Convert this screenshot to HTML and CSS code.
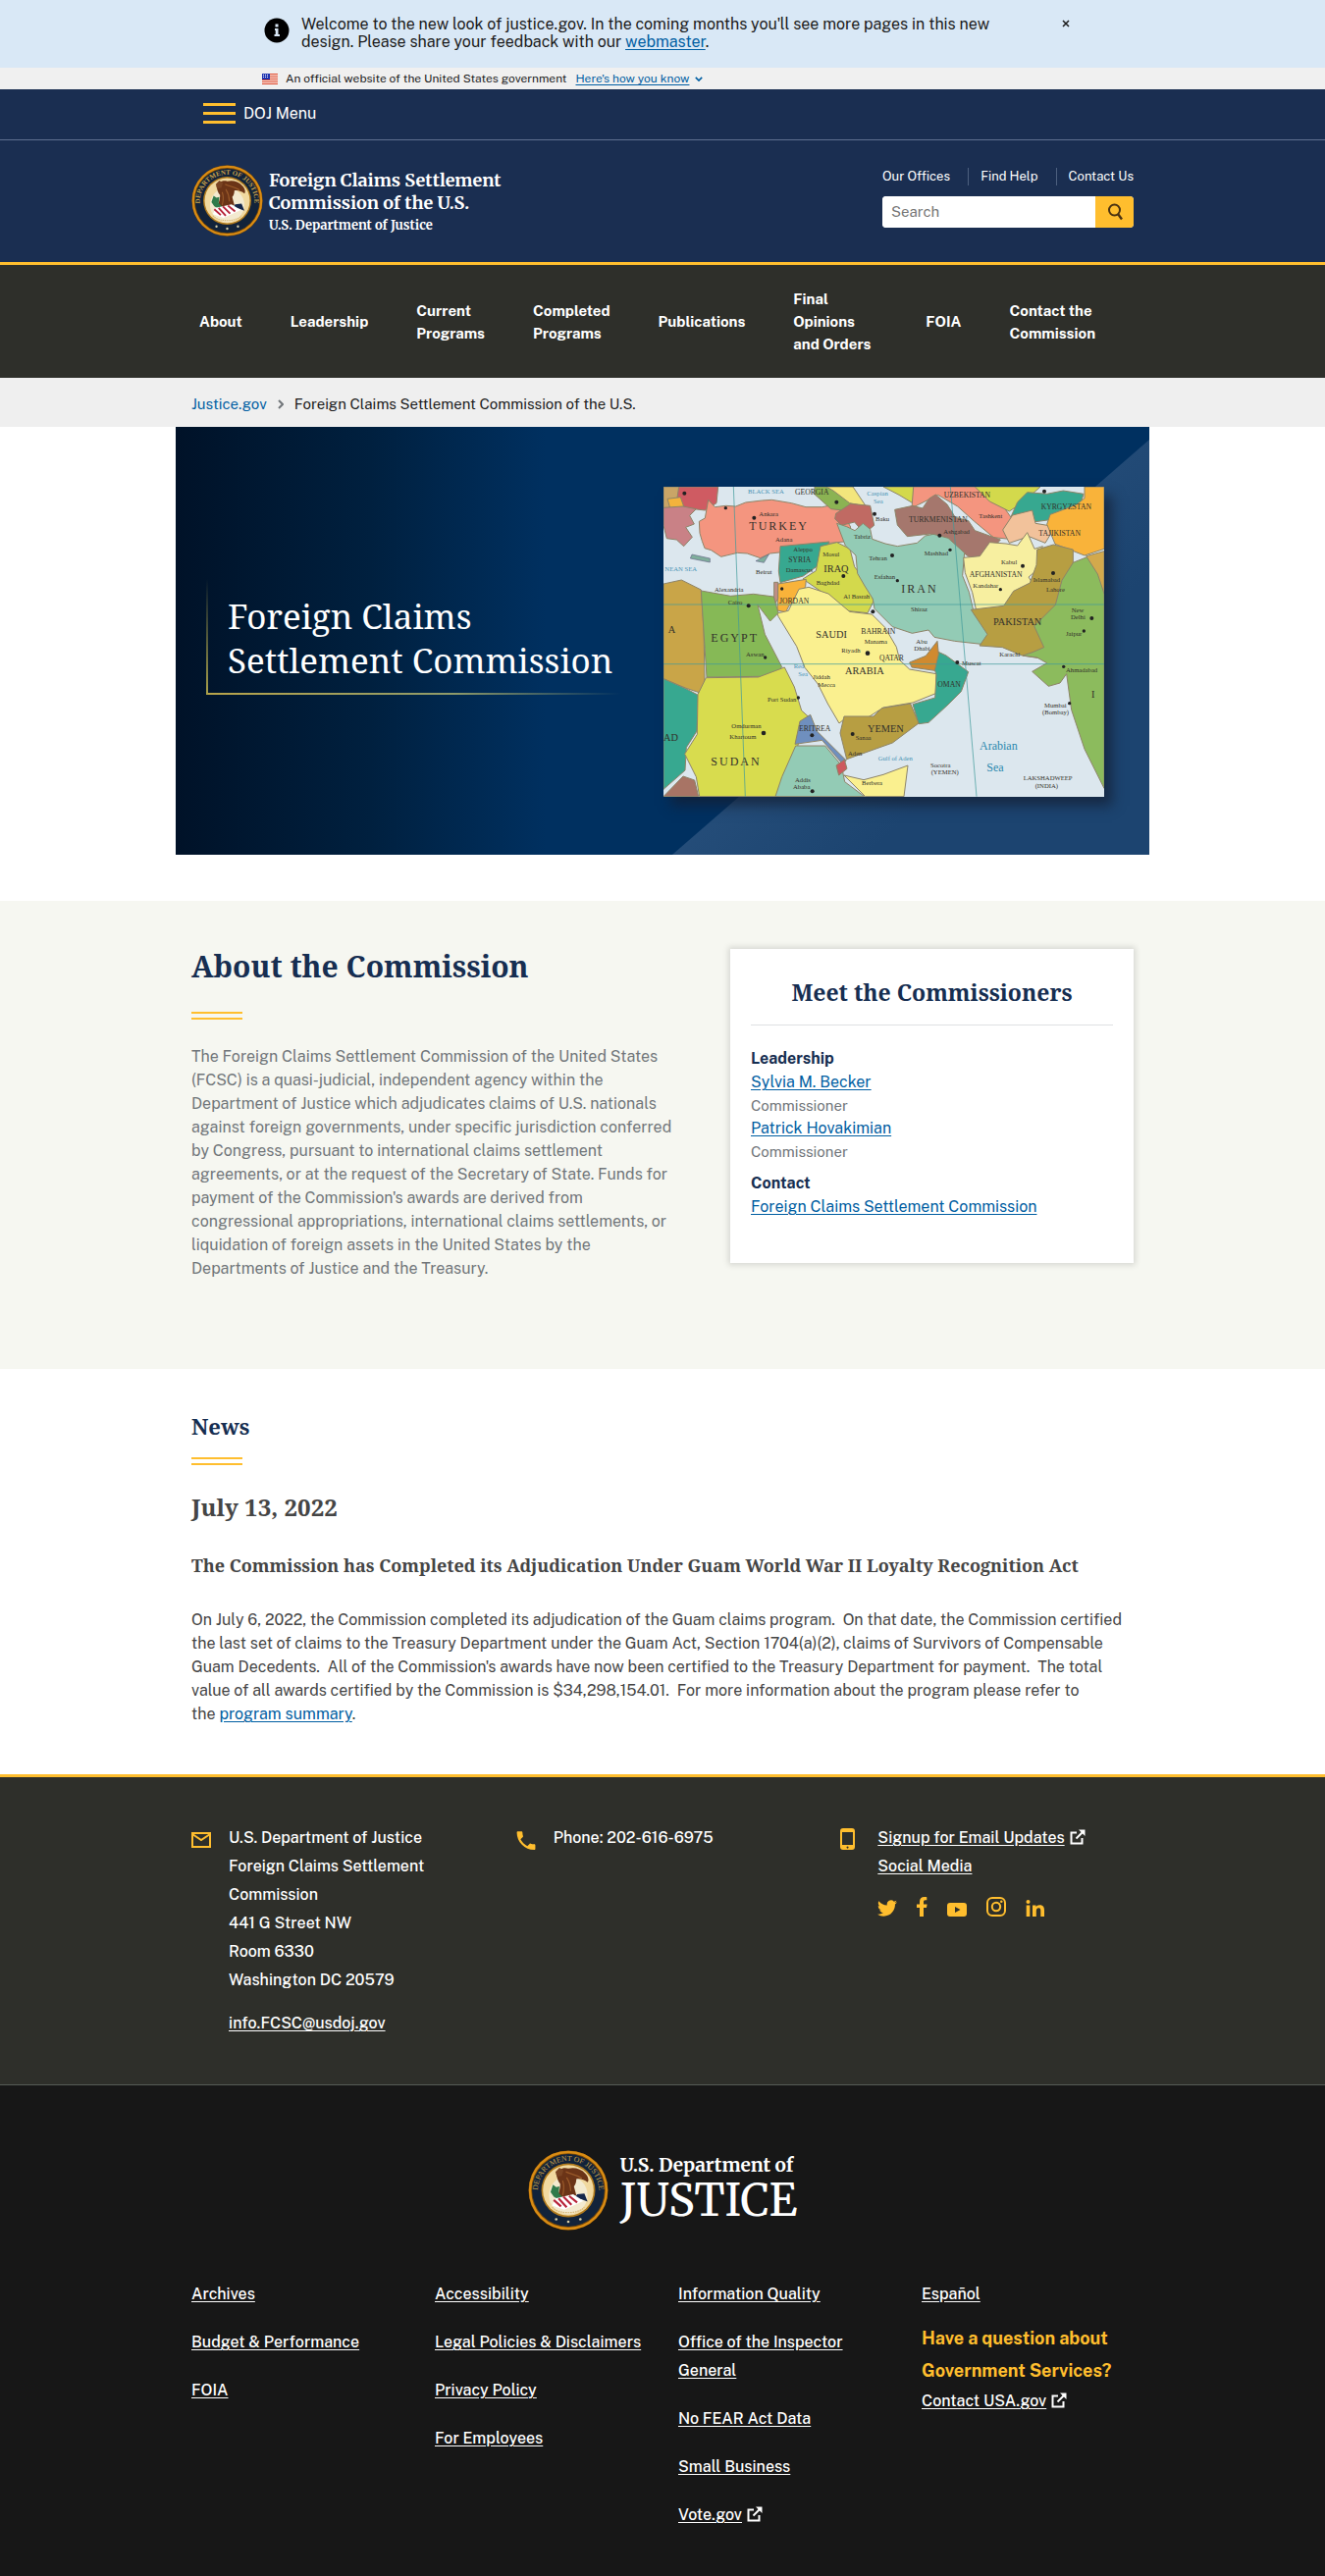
FILE: index.html
```html
<!DOCTYPE html>
<html lang="en">
<head>
<meta charset="utf-8">
<meta name="viewport" content="width=device-width, initial-scale=1">
<title>Foreign Claims Settlement Commission of the U.S.</title>
<link rel="stylesheet" href="styles.css">
</head>
<body>
<svg class="defs" width="0" height="0" aria-hidden="true">
  <defs>
    <path id="seal-arc" d="M13.500 62A38 38 0 1 1 86.500 62"/>
    <symbol id="seal" viewBox="0 0 100 100">
      <circle cx="50" cy="50" r="49.500" fill="#7a4a08"/>
      <circle cx="50" cy="50" r="47.500" fill="none" stroke="#d98c14" stroke-width="3"/>
      <circle cx="50" cy="50" r="45" fill="#12233a"/>
      <text class="seal-text" font-size="9.500" fill="#c9a24a"><textPath href="#seal-arc" startOffset="50%" text-anchor="middle">DEPARTMENT OF JUSTICE</textPath></text>
      <g fill="#d8cfa8"><circle cx="35" cy="86" r="1.600"/><circle cx="50" cy="89" r="1.600"/><circle cx="65" cy="86" r="1.600"/></g>
      <circle cx="50" cy="50" r="33.500" fill="#b07a1c"/>
      <circle cx="50" cy="50" r="31.500" fill="#f1d9a0"/>
      <circle cx="50" cy="56" r="24" fill="#f3ead0"/>
      <path d="M35 30c2-6 9-9 15-7 7-2 16 0 21 6 4 4 5 9 3 11-4-3-9-5-14-4 0 4-1 7-3 9l3 11-6 4-5 6-6-6-6-4c2-5 3-9 3-14-3-3-4-8-5-12z" fill="#6b3417"/>
      <path d="M47 27c6 3 12 3 20 8M48 34c3 5 5 9 5 17M43 38c2 6 2 11 0 18" stroke="#9a5a2a" stroke-width="1.500" fill="none"/>
      <path d="M34 27l5-5 5 3-2 7-6 1z" fill="#7a4423"/>
      <path d="M28 52l3-9 4 3 4-1-1 8 5 6-4 3-7-4z" fill="#2f7a4b"/>
      <path d="M70 54l4 10-8-3-9 0 4-6z" fill="#14264a"/>
      <path d="M34 60l22-5 13 8-24 11-15-5z" fill="#fff"/>
      <path d="M32 62l9 8M38 60l10 11M44 58l10 10M51 57l10 8" stroke="#b7243a" stroke-width="2.600"/>
      <path d="M30 71c8 9 32 9 40 0" fill="none" stroke="#d9b977" stroke-width="1.500" stroke-dasharray="2 1"/>
    </symbol>
    <symbol id="external" viewBox="0 0 16 16">
      <path d="M7 3.500H1.500v11h11V9" fill="none" stroke="currentColor" stroke-width="2"/>
      <path d="M6.500 9.500L13 3" stroke="currentColor" stroke-width="2"/>
      <path d="M9 .5h6.500V7z" fill="currentColor"/>
    </symbol>
  </defs>
</svg>

<section class="alert" aria-label="Site announcement">
  <div class="alert-inner">
    <svg class="alert-icon" viewBox="0 0 26 26" aria-hidden="true"><circle cx="13" cy="13" r="12.500" fill="#000"/><path d="M11.500 6.500h3v3h-3zM11 11h3.500v6H16v2h-5.500v-2h1.200v-4H11z" fill="#d9e8f6"/></svg>
    <p class="alert-text">Welcome to the new look of justice.gov. In the coming months you'll see more pages in this new design. Please share your feedback with our <a class="link" href="#">webmaster</a>.</p>
    <button class="alert-close" type="button" aria-label="Close"><svg viewBox="0 0 8 8" width="8" height="8" aria-hidden="true"><path d="M1 1l6 6M7 1L1 7" stroke="#1b1b1b" stroke-width="1.500"/></svg></button>
  </div>
</section>

<section class="gov" aria-label="Official website">
  <div class="gov-inner">
    <svg class="flag" viewBox="0 0 16 11" aria-hidden="true"><path fill="#fff" d="M0 0h16v11H0z"/><path d="M0 .5h16M0 2.500h16M0 4.500h16M0 6.500h16M0 8.500h16M0 10.500h16" stroke="#db3e1f"/><path fill="#1e33b1" d="M0 0h8v6H0z"/><path d="M1 1.500h6M1 3.500h6" stroke="#fff" stroke-dasharray="1 1"/></svg>
    <span>An official website of the United States government</span>
    <a class="link gov-link" href="#">Here's how you know</a>
    <svg class="chev" viewBox="0 0 10 6" aria-hidden="true"><path d="M1 1l4 4 4-4" fill="none" stroke="#005ea2" stroke-width="2"/></svg>
  </div>
</section>

<header class="header">
  <div class="menu-bar">
    <div class="wrap">
      <button class="menu-button" type="button"><span class="burger"></span>DOJ Menu</button>
    </div>
  </div>
  <div class="wrap masthead">
    <a class="brand" href="#">
      <svg class="brand-seal" aria-hidden="true"><use href="#seal"/></svg>
      <span class="brand-text"><span class="brand-name">Foreign Claims Settlement<br>Commission of the U.S.</span><span class="brand-dept">U.S. Department of Justice</span></span>
    </a>
    <div class="tools">
      <nav class="tool-links" aria-label="Secondary"><a href="#">Our Offices</a><a href="#">Find Help</a><a href="#">Contact Us</a></nav>
      <form class="search" role="search">
        <input type="search" placeholder="Search" aria-label="Search">
        <button type="submit" aria-label="Search"><svg viewBox="0 0 16 18" width="16" height="18" aria-hidden="true"><circle cx="7.500" cy="7" r="5.500" fill="none" stroke="#4a3212" stroke-width="2"/><path d="M11 11l4 5.500" stroke="#4a3212" stroke-width="2.400"/></svg></button>
      </form>
    </div>
  </div>
</header>

<nav class="nav" aria-label="Primary">
  <div class="wrap nav-inner">
    <a href="#">About</a>
    <a href="#">Leadership</a>
    <a href="#">Current<br>Programs</a>
    <a href="#">Completed<br>Programs</a>
    <a href="#">Publications</a>
    <a class="nav-wide" href="#">Final<br>Opinions<br>and Orders</a>
    <a href="#">FOIA</a>
    <a href="#">Contact the<br>Commission</a>
  </div>
</nav>

<nav class="crumbs" aria-label="Breadcrumb">
  <div class="wrap crumbs-inner">
    <a href="#">Justice.gov</a>
    <svg viewBox="0 0 6 10" width="6" height="10" aria-hidden="true"><path d="M1 1l4 4-4 4" fill="none" stroke="#71767a" stroke-width="2"/></svg>
    <span>Foreign Claims Settlement Commission of the U.S.</span>
  </div>
</nav>

<main>
  <section class="hero">
    <h1 class="hero-title">Foreign Claims<br>Settlement Commission</h1>
    <svg class="map" viewBox="48 198 1347 948" role="img" aria-label="Map of the Middle East">
      <path fill="#dce7ee" d="M48 198h1347v948H48z"/>
      <g stroke="#8d8468" stroke-width="3" stroke-linejoin="round">
        <!-- Balkans, Greece -->
        <path fill="#c9a567" d="M48 198h60l-12 50-48 20z"/>
        <path fill="#cf5b62" d="M95 198h120l-5 50-35 22-70-8-15-30z"/>
        <path fill="#f3b33c" d="M60 235l40-5 10 28-40 12z"/>
        <path fill="#c98186" d="M48 262l60-4 40 8-20 20 14 26-26 10 20 30-26 28-22-20-30-4-10-40z"/>
        <!-- Turkey -->
        <path fill="#f4957f" d="M185 238l20 22 34-4 30 2 30-12 50-6 30-2 60 10 44 12 50 0 40-8 20 14 7 20 20 35-10 35-10 10-40 4-30 16-60 2-60 10-36 4-30 14-40-14-30-2-50 12-30-20-20-6-8-22-7-24-2-36 18-10z"/>
        <!-- Caucasus and Central Asia -->
        <path fill="#8bb353" d="M510 198h70l60 50 10 28-90-10-50-45z"/>
        <path fill="#f3e67c" d="M545 198h82l40 60-50-10-50-38z"/>
        <path fill="#c06a63" d="M575 280l45-30 60 6 12 60-30 25-30-35-40 10-20-20z"/>
        <path fill="#d3d94c" d="M720 198h100l-2 55-50-30z"/>
        <path fill="#f4957f" d="M812 198h220l40 40 50 70-15 50-50-5-60-50-50-45-60-35-60 30-20 10z"/>
        <path fill="#d3d94c" d="M1000 198h200l-50 45-45 30-60-30z"/>
        <path fill="#a5776d" d="M755 268l55-12 30 8 20-30 20-12 35 30 25 40 40 10 20 30 78 28-40 45-35 10-15 2-40-30-25-30-60-15-70 8-30-35z"/>
        <path fill="#37a890" d="M1110 290l20-45 30-30 60 5 50-10 62 10-10 35-60 25-40 20-60 8z"/>
        <path fill="#f2c29b" d="M1085 330l30-45 60-15 10 40 60 10-30 50-50-20-60 20z"/>
        <path fill="#f9b33a" d="M1335 198h60v190l-60 20-90-35-25-60 10-30 80-30 25-20z"/>
        <!-- Levant, Iraq, Iran -->
        <path fill="#37a890" d="M405 380l150-14-30 70-50 35-70 20-5-35z"/>
        <path fill="#d3d94c" d="M528 380l50-12 40 20 14 55 40 50 18 55-18 36-58-6-70-50-70-48 40-25z"/>
        <path fill="#f9b33a" d="M398 495l86-14-2 22-20 40-30 18-10 20-26-5z"/>
        <path fill="#bf8f86" d="M386 490l12 0 0 50-12 20z"/>
        <path fill="#93cbb5" d="M578 310l30 10 25 12 25-22 22 18 6 30 40 14 37 8 60-10 25-22 25-5 45 12 50 45-6 70 20 50 16 68 50 60-20 32-90-10-62-12-18-22-50 10-60-20-55-55-5-30-25-40-22-38-5-55-32-30z"/>
        <!-- South Asia -->
        <path fill="#f7efa0" d="M965 415l50-5 30-42 50 4 35 6 30-40 22 50 25-8 -13 38-6 36-24 20 10 16-30 22-20 26-22 32-98 6-12-55-22-60z"/>
        <path fill="#b79e42" d="M1190 390l50-15 60 15 0 55-15 45-20 70-65 65 30 65-20 34-66-10-60-25-70-5 24-35-50-75 100-12 30-45 50-25 20-55z"/>
        <path fill="#8cbb5d" d="M1300 430l50-20 45 60v650l-60-120-40-120-15-110-20 28-35 10-50-45 45-26-30-17-44-6 30-10 35-15-30-65 65-65 20-75z"/>
        <path fill="#d3a94c" d="M1340 410l55-15v130l-20-60z"/>
        <!-- Arabia -->
        <path fill="#faf08f" d="M395 585l35-8 32-66 30-6 60 20 65 55 68 8 40 40 35 60 10 40 30 28 82 14-2 60-70 28-90 15-50 32-70 4-15 12-35-60-30-60-40-50-25-65-55-90z"/>
        <path fill="#37a890" d="M882 700l30 14 68 50-22 60-40 40-60 55-30 4-18-60 68-20 4-70-16-50z"/>
        <path fill="#d08a2f" d="M800 735l50-20 35-45 4 40-12 50-70-10z"/>
        <path fill="#b79e42" d="M600 900l90 0 25-25 88-14 25 60-80 60-140 50-20-80z"/>
        <!-- Africa -->
        <path fill="#c9a548" d="M48 495l55-12 60 30 8 120 4 200-60-20-67-28z"/>
        <path fill="#86b956" d="M163 516l90 16 70-6 62 8 14 50-25 25-38-50 22 90 52 100-30 35-40-6-160 2z"/>
        <path fill="#37a890" d="M48 785l68 30 38 20-4 110-32 50-4 70-66 58z"/>
        <path fill="#d8dc4e" d="M178 782l160-2 80-30 30 60 22 72 22 20-24 50-20 80-30 50-20 63H158l-10-60-35-70 38-60 2-122z"/>
        <path fill="#6f8fbe" d="M450 985l15-70 32-20 20 50 90 90-14 8-60-70z"/>
        <path fill="#93cbb5" d="M390 1145l20-60 42-95 90 0 50 60 10 50 60 45z"/>
        <path fill="#cd5a5e" d="M576 1050l25-18 8 28-25 20z"/>
        <path fill="#faf08f" d="M600 1080l60 14 60-16 75-28-12 95H665z"/>
        <path fill="#a87465" d="M48 1145l60-62 35 12 12 50z"/>
      </g>
      <path d="M135 405l55 12 0 12-60-12zM330 425l40-20-15 25z" fill="#7fae9c" stroke="#668" stroke-width="2"/>
      <path d="M48 558h1347M48 740h1347M262 198l36 947M925 198l80 947" fill="none" stroke="#3f9a9a" stroke-width="3" opacity=".7"/>
      <g class="map-label map-xl"><text x="310" y="330">TURKEY</text><text x="775" y="522">IRAN</text><text x="193" y="672">EGYPT</text><text x="193" y="1050">SUDAN</text></g>
      <g class="map-label map-l"><text x="514" y="660">SAUDI</text><text x="603" y="772">ARABIA</text><text x="538" y="458">IRAQ</text><text x="1056" y="622">PAKISTAN</text><text x="672" y="947">YEMEN</text><text x="62" y="644">A</text><text x="48" y="976">AD</text><text x="1356" y="842">I</text></g>
      <g class="map-label map-m"><text x="430" y="430">SYRIA</text><text x="402" y="554">JORDAN</text><text x="798" y="306">TURKMENISTAN</text><text x="1202" y="267">KYRGYZSTAN</text><text x="1195" y="347">TAJIKISTAN</text><text x="983" y="474">AFGHANISTAN</text><text x="886" y="810">OMAN</text><text x="708" y="729">QATAR</text><text x="905" y="230">UZBEKISTAN</text><text x="450" y="223">GEORGIA</text><text x="462" y="944">ERITREA</text><text x="652" y="648">BAHRAIN</text></g>
      <g class="map-label map-s"><text x="340" y="289">Ankara</text><text x="390" y="365">Adana</text><text x="445" y="397">Aleppo</text><text x="535" y="412">Mosul</text><text x="515" y="497">Baghdad</text><text x="676" y="423">Tehran</text><text x="692" y="481">Esfahan</text><text x="845" y="409">Mashhad</text><text x="630" y="356">Tabriz</text><text x="696" y="304">Baku</text><text x="904" y="341">Ashgabad</text><text x="1012" y="293">Tashkent</text><text x="1080" y="434">Kabul</text><text x="994" y="507">Kandahar</text><text x="1178" y="490">Islamabad</text><text x="1218" y="519">Lahore</text><text x="1295" y="582">New</text><text x="1293" y="604">Delhi</text><text x="1278" y="655">Jaipur</text><text x="1075" y="718">Karachi</text><text x="1278" y="766">Ahmadabad</text><text x="1212" y="873">Mumbai</text><text x="1206" y="893">(Bombay)</text><text x="592" y="705">Riyadh</text><text x="505" y="785">Jiddah</text><text x="520" y="810">Mecca</text><text x="245" y="558">Cairo</text><text x="204" y="518">Alexandria</text><text x="300" y="717">Aswan</text><text x="366" y="855">Port Sudan</text><text x="256" y="937">Omdurman</text><text x="250" y="968">Khartoum</text><text x="450" y="1100">Addis</text><text x="444" y="1121">Ababa</text><text x="635" y="972">Sanaa</text><text x="654" y="1110">Berbera</text><text x="598" y="541">Al Basrah</text><text x="662" y="678">Manama</text><text x="820" y="678">Abu</text><text x="814" y="700">Dhabi</text><text x="960" y="744">Muscat</text><text x="804" y="580">Shiraz</text><text x="330" y="464">Beirut</text><text x="422" y="460">Damascus</text><text x="864" y="1056">Socotra</text><text x="866" y="1076">(YEMEN)</text><text x="1148" y="1096">LAKSHADWEEP</text><text x="1184" y="1118">(INDIA)</text><text x="612" y="1020">Aden</text></g>
      <g class="map-label map-sea"><text x="1014" y="1003">Arabian</text><text x="1036" y="1069">Sea</text></g>
      <g class="map-label map-s map-blue"><text x="306" y="218">BLACK SEA</text><text x="670" y="226">Caspian</text><text x="690" y="248">Sea</text><text x="52" y="455">NEAN SEA</text><text x="446" y="752">Red</text><text x="460" y="778">Sea</text><text x="704" y="1036">Gulf of Aden</text></g>
      <g fill="#222"><circle cx="325" cy="293" r="6"/><circle cx="747" cy="408" r="6"/><circle cx="763" cy="485" r="5"/><circle cx="598" cy="471" r="6"/><circle cx="672" cy="707" r="7"/><circle cx="892" cy="347" r="6"/><circle cx="1146" cy="440" r="6"/><circle cx="1078" cy="512" r="5"/><circle cx="1239" cy="462" r="6"/><circle cx="1357" cy="600" r="6"/><circle cx="1333" cy="639" r="5"/><circle cx="308" cy="562" r="6"/><circle cx="359" cy="720" r="5"/><circle cx="460" cy="843" r="5"/><circle cx="354" cy="951" r="7"/><circle cx="503" cy="1129" r="6"/><circle cx="626" cy="954" r="6"/><circle cx="946" cy="735" r="6"/><circle cx="1271" cy="748" r="5"/><circle cx="1289" cy="860" r="5"/><circle cx="693" cy="281" r="6"/><circle cx="577" cy="245" r="6"/><circle cx="238" cy="263" r="5"/><circle cx="112" cy="218" r="6"/><circle cx="924" cy="391" r="5"/><circle cx="502" cy="958" r="6"/><circle cx="688" cy="580" r="6"/><circle cx="410" cy="510" r="5"/><circle cx="1212" cy="212" r="6"/></g>
    </svg>
  </section>

  <section class="about">
    <div class="wrap about-grid">
      <div>
        <h2 class="title">About the Commission</h2>
        <div class="rule"></div>
        <p class="about-text">The Foreign Claims Settlement Commission of the United States (FCSC) is a quasi-judicial, independent agency within the Department of Justice which adjudicates claims of U.S. nationals against foreign governments, under specific jurisdiction conferred by Congress, pursuant to international claims settlement agreements, or at the request of the Secretary of State. Funds for payment of the Commission's awards are derived from congressional appropriations, international claims settlements, or liquidation of foreign assets in the United States by the Departments of Justice and the Treasury.</p>
      </div>
      <aside class="card">
        <h2 class="card-title">Meet the Commissioners</h2>
        <h3 class="card-sub">Leadership</h3>
        <p class="person"><a class="link" href="#">Sylvia M. Becker</a></p>
        <p class="role">Commissioner</p>
        <p class="person"><a class="link" href="#">Patrick Hovakimian</a></p>
        <p class="role">Commissioner</p>
        <h3 class="card-sub card-contact">Contact</h3>
        <p class="person"><a class="link" href="#">Foreign Claims Settlement Commission</a></p>
      </aside>
    </div>
  </section>

  <section class="news">
    <div class="wrap">
      <h2 class="news-title">News</h2>
      <div class="rule"></div>
      <h2 class="news-date">July 13, 2022</h2>
      <h3 class="news-head">The Commission has Completed its Adjudication Under Guam World War II Loyalty Recognition Act</h3>
      <p class="news-text">On July 6, 2022, the Commission completed its adjudication of the Guam claims program.&nbsp; On that date, the Commission certified the last set of claims to the Treasury Department under the Guam Act, Section 1704(a)(2), claims of Survivors of Compensable Guam Decedents.&nbsp; All of the Commission's awards have now been certified to the Treasury Department for payment.&nbsp; The total value of all awards certified by the Commission is $34,298,154.01.&nbsp; For more information about the program please refer to the&nbsp;<a class="link" href="#">program summary</a>.</p>
    </div>
  </section>
</main>

<footer>
  <div class="contact">
    <div class="wrap contact-grid">
      <div class="contact-item">
        <svg class="contact-icon" viewBox="0 0 20 22" aria-hidden="true"><path d="M1 5h18v14H1zM1 6l9 6 9-6" fill="none" stroke="currentColor" stroke-width="2"/></svg>
        <div>
          <address>U.S. Department of Justice<br>Foreign Claims Settlement Commission<br>441 G Street NW<br>Room 6330<br>Washington DC 20579</address>
          <p class="email"><a href="#">info.FCSC@usdoj.gov</a></p>
        </div>
      </div>
      <div class="contact-item">
        <svg class="contact-icon" viewBox="3 0 18 21" aria-hidden="true"><path d="M6.620 10.790c1.440 2.830 3.760 5.140 6.590 6.590l2.200-2.200c.27-.27.67-.36 1.020-.24 1.120.37 2.330.57 3.570.57.55 0 1 .45 1 1V20c0 .55-.45 1-1 1-9.390 0-17-7.610-17-17 0-.55.45-1 1-1h3.500c.55 0 1 .45 1 1 0 1.250.2 2.450.57 3.570.11.35.03.74-.25 1.020l-2.200 2.200z" fill="currentColor"/></svg>
        <p>Phone: 202-616-6975</p>
      </div>
      <div class="contact-item">
        <svg class="contact-icon" viewBox="0 0 20 22" aria-hidden="true"><path fill-rule="evenodd" d="M3 0h9a3 3 0 0 1 3 3v16a3 3 0 0 1-3 3H3a3 3 0 0 1-3-3V3a3 3 0 0 1 3-3zM2 4v13h11V4zM7.500 18.500a1 1 0 1 0 .1 0z" fill="currentColor"/></svg>
        <div>
          <p><a href="#">Signup for Email Updates</a><svg class="ext" aria-hidden="true"><use href="#external"/></svg></p>
          <p><a href="#">Social Media</a></p>
          <div class="social">
            <a href="#" aria-label="Twitter"><svg width="20" height="17" viewBox="0 2 24 20" aria-hidden="true"><path d="M23.953 4.570a10 10 0 01-2.825.775 4.958 4.958 0 002.163-2.723c-.951.555-2.005.959-3.127 1.184a4.920 4.920 0 00-8.384 4.482C7.690 8.095 4.067 6.130 1.640 3.162a4.822 4.822 0 00-.666 2.475c0 1.710.87 3.213 2.188 4.096a4.904 4.904 0 01-2.228-.616v.06a4.923 4.923 0 003.946 4.827 4.996 4.996 0 01-2.212.085 4.936 4.936 0 004.604 3.417 9.867 9.867 0 01-6.102 2.105c-.39 0-.779-.023-1.170-.067a13.995 13.995 0 007.557 2.209c9.053 0 13.998-7.496 13.998-13.985 0-.21 0-.42-.015-.63A9.935 9.935 0 0024 4.590z" fill="currentColor"/></svg></a>
            <a href="#" aria-label="Facebook"><svg width="11" height="20" viewBox="0 0 11 20" aria-hidden="true"><path d="M3 20v-9H0V7.500h3V5c0-3.200 1.800-5 4.700-5 1.300 0 2.600.2 2.600.2v3H8.800C7.400 3.200 7 4.100 7 5v2.500h3.600L10 11H7v9z" fill="currentColor"/></svg></a>
            <a href="#" aria-label="YouTube"><svg width="20" height="14" viewBox="0 0 20 14" aria-hidden="true"><path fill-rule="evenodd" d="M3 0h14a3 3 0 0 1 3 3v8a3 3 0 0 1-3 3H3a3 3 0 0 1-3-3V3a3 3 0 0 1 3-3zm5 4v6l5.500-3z" fill="currentColor"/></svg></a>
            <a href="#" aria-label="Instagram"><svg width="20" height="20" viewBox="0 0 20 20" aria-hidden="true"><rect x="1" y="1" width="18" height="18" rx="5" fill="none" stroke="currentColor" stroke-width="2"/><circle cx="10" cy="10" r="4.200" fill="none" stroke="currentColor" stroke-width="2"/><circle cx="15.300" cy="4.800" r="1.300" fill="currentColor"/></svg></a>
            <a href="#" aria-label="LinkedIn"><svg width="20" height="17" viewBox="0 0 20 17" aria-hidden="true"><circle cx="2.500" cy="2" r="2" fill="currentColor"/><path d="M.7 5.500h3.600V17H.7zM7 5.500h3.500v1.600c.6-1.100 1.900-1.900 3.800-1.900 3.800 0 4.700 2.300 4.700 5.600V17h-3.700v-5.600c0-1.500-.1-3.200-2-3.200-2 0-2.500 1.500-2.500 3.100V17H7z" fill="currentColor"/></svg></a>
          </div>
        </div>
      </div>
    </div>
  </div>
  <div class="bottom">
    <div class="wrap">
      <a class="logo" href="#">
        <svg class="logo-seal" aria-hidden="true"><use href="#seal"/></svg>
        <span class="logo-text"><span class="logo-small">U.S. Department of</span><span class="logo-big">JUSTICE</span></span>
      </a>
      <div class="link-grid">
        <ul><li><a href="#">Archives</a></li><li><a href="#">Budget &amp; Performance</a></li><li><a href="#">FOIA</a></li></ul>
        <ul><li><a href="#">Accessibility</a></li><li><a href="#">Legal Policies &amp; Disclaimers</a></li><li><a href="#">Privacy Policy</a></li><li><a href="#">For Employees</a></li></ul>
        <ul><li><a href="#">Information Quality</a></li><li><a href="#">Office of the Inspector General</a></li><li><a href="#">No FEAR Act Data</a></li><li><a href="#">Small Business</a></li><li><a href="#">Vote.gov</a><svg class="ext" aria-hidden="true"><use href="#external"/></svg></li></ul>
        <div>
          <p><a href="#">Español</a></p>
          <h2 class="question">Have a question about Government Services?</h2>
          <p><a href="#">Contact USA.gov</a><svg class="ext" aria-hidden="true"><use href="#external"/></svg></p>
        </div>
      </div>
    </div>
  </div>
</footer>
</body>
</html>
```
FILE: styles.css
```css
* { box-sizing: border-box; }
body {
  margin: 0;
  background: #fff;
  color: #1b1b1b;
  font: 16px/24px "Public Sans", Inter, "Liberation Sans", sans-serif;
}
h1, h2, h3, p, ul { margin: 0; padding: 0; }
ul { list-style: none; }
address { font-style: normal; }
svg { display: block; flex: none; }
button, input { font: inherit; }
.defs { position: absolute; }
.wrap { max-width: 960px; margin: 0 auto; }
.link { color: #005ea2; text-decoration: underline; text-underline-offset: 2px; }

.alert { background: #d9e8f6; }
.alert-inner {
  display: flex;
  align-items: flex-start;
  max-width: 832px;
  min-height: 69px;
  margin: 0 auto;
  padding: 16px 0 17px 10px;
}
.alert-icon { width: 26px; height: 26px; margin: 2px 12px 0 0; }
.alert-text { flex: 0 1 722px; line-height: 18px; }
.alert-close { margin: 0 0 0 auto; padding: 4px 1px; border: 0; background: none; }

.gov { background: #f0f0f0; font-size: 12px; line-height: 22px; }
.gov-inner { display: flex; align-items: center; max-width: 832px; margin: 0 auto; padding-left: 8px; }
.flag { width: 16px; height: 11px; margin-right: 8px; }
.gov-link { margin: 0 6px 0 9px; }
.chev { width: 8px; height: 5px; }

.header { background: #1a2e51; color: #fff; border-bottom: 3px solid #ffbe2e; }
.header a { color: #fff; text-decoration: none; }
.menu-bar { border-bottom: 1px solid #5f7090; }
.menu-button {
  display: flex;
  align-items: center;
  gap: 8px;
  height: 51px;
  padding: 0 0 2px 12px;
  border: 0;
  background: none;
  color: #fff;
}
.burger { width: 33px; height: 21px; border: solid #ffbe2e; border-width: 3px 0; background: linear-gradient(#ffbe2e, #ffbe2e) center / 100% 3px no-repeat; }
.masthead { display: flex; justify-content: space-between; padding: 25px 0 26px; }
.brand { display: flex; align-items: center; gap: 6px; font-family: Merriweather, "Noto Serif", "Liberation Serif", serif; font-weight: 700; }
.brand-seal { width: 73px; height: 73px; }
.brand-text, .logo-text { display: flex; flex-direction: column; }
.brand-text { padding-top: 4px; }
.brand-name { font-size: 18px; line-height: 23px; }
.brand-dept { font-size: 13px; line-height: 23px; }
.tools { width: 256px; }
.tool-links { display: flex; justify-content: space-between; padding-top: 3px; font-size: 13px; line-height: 18px; }
.tool-links a + a { border-left: 1px solid #4d607f; padding-left: 12px; }
.search { display: flex; height: 32px; margin-top: 11px; border-radius: 4px; overflow: hidden; background: #fff; }
.search input { flex: 1; min-width: 0; padding: 0 9px; border: 0; background: #fff; font-size: 15px; }
.search input::placeholder { color: #757575; }
.search button { display: flex; align-items: center; justify-content: center; width: 39px; border: 0; background: #ffbe2e; }

.nav { background: #2e2f2a; }
.nav-inner { display: flex; align-items: center; gap: 49px; padding: 23px 8px; font-size: 15px; line-height: 23px; font-weight: 700; }
.nav a { color: #fff; text-decoration: none; }
.nav-wide { min-width: 86px; }

.crumbs { background: #efefef; font-size: 15px; }
.crumbs-inner { display: flex; align-items: center; gap: 11px; padding: 15px 0 11px; }
.crumbs a { color: #005ea2; text-decoration: none; }

.hero {
  position: relative;
  display: grid;
  grid-template-columns: minmax(0, 422px) minmax(0, 449px);
  justify-content: space-between;
  align-items: center;
  max-width: 992px;
  margin: 0 auto 47px;
  padding: 61px 46px 59px 31px;
  background: linear-gradient(90deg, #001228, #00203f 20%, #003060 38%);
}
.hero::before {
  content: "";
  position: absolute;
  inset: 0;
  background: linear-gradient(135deg, #335c88 40%, #1c4470 80%);
  clip-path: polygon(51% 100%, 100% 3%, 100% 100%);
}
.hero-title {
  margin-bottom: 10px;
  padding: 15px 0 13px 22px;
  background:
    linear-gradient(transparent, #a8a04a) left / 2px 100% no-repeat,
    linear-gradient(90deg, #b8a44a, #8d9a6a 60%, transparent) bottom / 100% 2px no-repeat;
  color: #fff;
  font: 400 35px/45px "Noto Serif", "Liberation Serif", serif;
}
.map { position: relative; width: 100%; height: auto; box-shadow: 8px 9px 12px rgba(20, 30, 50, .7); }
.map-label { font-family: "Liberation Serif", serif; fill: #33312b; }
.map-xl { font-size: 36px; letter-spacing: 6px; }
.map-l { font-size: 31px; }
.map-m { font-size: 23px; }
.map-s { font-size: 20px; }
.map-sea { font-size: 36px; fill: #2b87ad; }
.map-blue { fill: #4a93b5; }
.seal-text { font-family: "Liberation Serif", serif; }

.about { background: #f6f7f1; padding: 49px 0 90px; }
.about-grid { display: grid; grid-template-columns: minmax(0, 500px) minmax(0, 411px); justify-content: space-between; align-items: start; }
.title, .card-title, .news-title, .news-date, .news-head { font-family: "Noto Serif", "Liberation Serif", serif; font-weight: 700; color: #162e51; }
.title { font-size: 30px; line-height: 36px; }
.rule { width: 52px; height: 8px; border: solid #ffbe2e; border-width: 2px 0; }
.title + .rule { margin: 28px 0 26px; }
.about-text { color: #71767a; }
.card { min-height: 320px; padding: 28px 21px 45px; background: #fff; box-shadow: 0 0 6px 2px rgba(0, 0, 0, .13); }
.card-title { margin-bottom: 22px; padding-bottom: 17px; border-bottom: 1px solid #dfe1e2; font-size: 23px; line-height: 32px; text-align: center; }
.card-sub { font-size: 16px; line-height: 24px; color: #162e51; }
.card-contact { margin-top: 9px; }
.role { font-size: 15px; line-height: 23px; color: #71767a; }

.news { padding: 42px 0 49px; }
.news-title { font-size: 22px; line-height: 32px; }
.news-title + .rule { margin: 16px 0 25px; }
.news-date { font-size: 24px; line-height: 36px; color: #454545; }
.news-head { margin: 27px 0 30px; font-size: 18px; line-height: 28px; color: #454545; }
.news-text { color: #454545; }

footer { font-weight: 500; line-height: 29px; color: #fff; }
footer a { color: #fff; text-underline-offset: 2px; }
.contact { border-top: 3px solid #ffbe2e; border-bottom: 1px solid #565c56; background: #2e2f2a; padding: 47px 0 48px; }
.contact-grid { display: grid; grid-template-columns: repeat(3, minmax(0, 1fr)); gap: 32px; }
.contact-item { display: flex; gap: 18px; }
.contact-icon { width: 20px; height: 22px; margin-top: 5px; color: #ffbe2e; }
.email { margin-top: 15px; }
.ext { display: inline-block; width: 16px; height: 16px; margin-left: 5px; vertical-align: -2px; }
.social { display: flex; align-items: flex-end; gap: 20px; height: 20px; margin-top: 17px; }
.social a { color: #ffbe2e; }

.bottom { background: #171717; padding: 66px 0 48px; }
.logo { display: flex; justify-content: center; align-items: center; gap: 12px; margin-bottom: 50px; font-family: Merriweather, "Noto Serif", "Liberation Serif", serif; text-decoration: none; }
.logo-seal { width: 82px; height: 82px; }
.logo-small { font-size: 19px; line-height: 20px; font-weight: 700; }
.logo-big { font-size: 45px; line-height: 52px; font-weight: 400; }
.link-grid { display: grid; grid-template-columns: repeat(4, minmax(0, 1fr)); gap: 32px; }
.link-grid ul { display: flex; flex-direction: column; gap: 20px; }
.question { margin: 14px 0 0; color: #ffbe2e; font-size: 18px; line-height: 33px; font-weight: 700; }
```
